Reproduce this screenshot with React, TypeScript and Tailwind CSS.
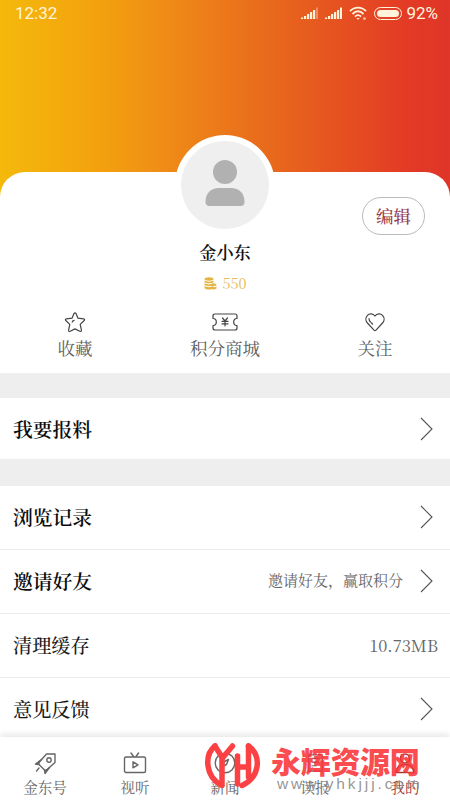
import type { ReactNode } from "react";

const serif = "font-['Noto_Serif_CJK_SC','Noto_Serif_SC','Noto_Sans_CJK_SC',serif]";

function Signal({ faded }: { faded?: boolean }) {
    return <svg width="18" height="13" viewBox="0 0 18 13" fill="#fff3dc">
        <rect x="0" y="10.5" width="2.2" height="1.5" />
        <rect x="3" y="9" width="2.2" height="3" />
        <rect x="6" y="7" width="2.2" height="5" />
        <rect x="9" y="5" width="2.2" height="7" />
        <rect x="12" y="3" width="2.2" height="9" />
        <rect x="15" y="0.5" width="2" height="11.5" opacity={faded ? 0.35 : 1} />
    </svg>
}

function StatusBar() {
    return <div className="flex h-[27px] items-start justify-between pl-[15px] pr-[12px] pt-[3px] font-['Roboto',sans-serif] text-[#fff3dc]">
        <span className="text-[17px] leading-[20px]">12:32</span>
        <div className="flex h-5 items-center">
            <Signal faded />
            <span className="w-[6px]" />
            <Signal />
            <svg className="ml-[6px]" width="19" height="15" viewBox="0 0 19 15" fill="none" stroke="#fff3dc" strokeWidth="1.8">
                <path d="M1 5.2C5.5.5 12.5.5 17 5.2" />
                <path d="M3.5 8C7 4.5 11 4.5 14.5 8" />
                <path d="M6 10.6c2-1.9 4-1.9 6 0" />
                <path d="M7.3 12h3.4L9 13.8z" fill="#fff3dc" stroke="none" />
                <circle cx="15.5" cy="12.5" r="1.5" fill="#fff3dc" stroke="none" opacity=".6" />
            </svg>
            <span className="ml-[6px] flex h-[13px] w-[28px] rounded-full border border-[#fff3dc] p-[2px]">
                <span className="flex-1 rounded-full bg-[#fff3dc]" />
            </span>
            <span className="ml-[4px] text-[17px] leading-5">92%</span>
        </div>
    </div>
}

function Chevron() {
    return <svg className="mr-[5px]" width="13" height="24" viewBox="0 0 13 24" fill="none" stroke="#555" strokeWidth="1.1">
        <path d="M1 1l11 11L1 23" />
    </svg>
}

function Action({ icon, label }: { icon: ReactNode; label: string }) {
    return <div className="flex w-[150px] flex-col items-center">
        <div className="flex h-[22px] items-center">{icon}</div>
        <span className="mt-[4px] text-[17.5px] leading-[22px] text-[#5e5e5e]">{label}</span>
    </div>
}

function Row({ label, bold, children }: { label: string; bold?: boolean; children?: ReactNode }) {
    return <div className="flex h-[64px] items-center justify-between pb-[2px] pl-[13px] pr-[12px]">
        <span className={bold ? "text-[19.8px] font-semibold leading-[28px] text-[#0c0c0c]" : "text-[19.2px] font-medium leading-[28px] text-[#181818]"}>{label}</span>
        <div className="flex items-center text-[#666]">{children}</div>
    </div>
}

function Tab({ icon, label, active }: { icon: ReactNode; label: string; active?: boolean }) {
    return <div className={`flex w-[90px] flex-col items-center pt-[14px] ${active ? "text-[#a43732]" : "text-[#666]"}`}>
        <div className="flex h-6 items-center">{icon}</div>
        <span className="mt-[2px] text-[14.5px] leading-[20px]">{label}</span>
    </div>
}

function Watermark() {
    return <div className="pointer-events-none absolute left-[204px] top-0 flex h-[63px] w-[230px]">
        <svg className="mt-[3px] shrink-0" width="58" height="50" viewBox="0 0 58 50" fill="none" stroke="#fb4144" strokeWidth="5.5" strokeLinecap="round" strokeLinejoin="round">
            <path d="M11 6C0 15 1 37 18 45.5V18" />
            <path d="M11 6l7.5 12L28.5 6" />
            <path d="M33.5 16v28M33.5 27h11M44.5 6v31" />
            <path d="M44.5 6C58 16 56 37 38 45.5" />
        </svg>
        <div className="ml-[9px] flex flex-col whitespace-nowrap">
            <span className="mt-[7px] font-['Noto_Sans_CJK_SC',sans-serif] text-[30px] font-black leading-[32px] tracking-[-0.3px] text-[#fb3438]/90">永辉资源网</span>
            <span className="ml-[6px] mt-[-1px] font-['Liberation_Sans',sans-serif] text-[15.5px] leading-[18px] tracking-[2.9px] text-[#8a8a8a]/90">www.yhkjjj.com</span>
        </div>
    </div>
}

export default function App() {
    return <div className={`relative h-[800px] w-[450px] overflow-hidden bg-[linear-gradient(90deg,#f4b90b_0%,#f3a10e_22%,#ef8b17_37%,#e8661d_62%,#e33b25_90%,#df3529_100%)] ${serif}`}>
        <StatusBar />
        <main className="relative mt-[145px] h-[628px] rounded-t-[25px] bg-white">
            <div className="absolute left-[175px] top-[-37px] flex h-[100px] w-[100px] items-center justify-center rounded-full bg-white">
                <div className="flex h-[88px] w-[88px] items-center justify-center rounded-full bg-[#efefef]">
                    <svg className="mb-[5px]" width="42" height="48" viewBox="0 0 42 48" fill="#b1b1b1">
                        <circle cx="21" cy="13" r="12" />
                        <path d="M1.5 43C1.5 34 7 29 15 29h12c8 0 13.5 5 13.5 14 0 2.5-1.5 4-4 4h-31c-2.5 0-4-1.5-4-4z" />
                    </svg>
                </div>
            </div>
            <button className="absolute right-[25px] top-[25px] h-[38px] w-[63px] rounded-full border border-[#bbb] text-[17.5px] font-medium leading-[34px] text-[#963b50]">编辑</button>

            <section className="flex h-[201px] flex-col items-center pt-[67px]">
                <h1 className="text-[17.2px] font-semibold leading-[26px] text-[#111]">金小东</h1>
                <div className="mt-[8px] flex h-5 items-center gap-[6px] text-[#e3bd57]">
                    <svg width="13" height="13" viewBox="0 0 13 13" fill="#e4b441">
                        <ellipse cx="5" cy="2" rx="4.5" ry="1.7" />
                        <path d="M.5 3.5c2 1.5 7 1.5 9 0v1.7c-2 1.5-7 1.5-9 0zM.5 6.3c2 1.5 7 1.5 9 0V8c-2 1.5-7 1.5-9 0zM.5 9.1c2 1.5 7 1.5 9 0v2.2c-2 1.7-7 1.7-9 0z" />
                        <ellipse cx="9.5" cy="7.8" rx="3" ry="1.3" />
                        <path d="M7 9.5c1.5 1 4 1 5.500 0v2c-1.500 1.200-4 1.200-5.500 0z" />
                    </svg>
                    <span className="text-[14.5px] leading-5">550</span>
                </div>
                <div className="mt-[18px] flex">
                    <Action label="收藏" icon={
                        <svg width="22" height="21" viewBox="0 0 22 21" fill="none" stroke="#444" strokeWidth="1.2" strokeLinejoin="round" strokeLinecap="round">
                            <path d="M9.9 1.7Q11 0 12.1 1.7L14 6.2l5.6.6q1.7.4.6 1.7l-4 3.9 1.2 5.7q.1 1.9-1.6 1.2L11 16.9l-4.8 2.4q-1.7.7-1.6-1.2l1.2-5.7-4-3.900Q.7 7.200 2.400 6.800L8 6.200z" />
                            <path d="M8.2 10.200q.3-1.500 1.900-1.900" />
                        </svg>
                    } />
                    <Action label="积分商城" icon={
                        <svg width="26" height="18" viewBox="0 0 26 18" fill="none" stroke="#444" strokeWidth="1.2" strokeLinejoin="round" strokeLinecap="round">
                            <path d="M3 1h20q2 0 2 2v2.500q-3.300 0-3.300 3.500T25 12.500V15q0 2-2 2H3q-2 0-2-2v-2.500Q4.300 12.500 4.300 9T1 5.500V3q0-2 2-2z" />
                            <path d="M10.500 5L13 8l2.500-3M10 8.300h6M10 10.800h6M13 8v5" />
                        </svg>
                    } />
                    <Action label="关注" icon={
                        <svg width="20" height="19" viewBox="0 0 20 19" fill="none" stroke="#444" strokeWidth="1.2" strokeLinejoin="round" strokeLinecap="round">
                            <path d="M10 3C8 .5 4.500.3 2.500 2.300S.5 7.500 2 9.500l7 7.700q1 1 2 0l7-7.700c1.500-2 1.500-5.200-.5-7.200S12 .5 10 3z" />
                            <path d="M4 5.500q0 2 1.500 3.500M6.500 10l1 1" />
                        </svg>
                    } />
                </div>
            </section>

            <div className="h-[25px] bg-[#eee]" />
            <div className="flex h-[61px] flex-col justify-center pt-[2px]">
                <Row label="我要报料" bold><Chevron /></Row>
            </div>
            <div className="h-[27px] bg-[#eee]" />
            <div className="divide-y divide-[#eaeaea]">
                <Row label="浏览记录" bold><Chevron /></Row>
                <Row label="邀请好友" bold>
                    <span className="mb-[2px] mr-[17px] text-[15px] leading-5">邀请好友，赢取积分</span>
                    <Chevron />
                </Row>
                <Row label="清理缓存"><span className="text-[16.5px] leading-6">10.73MB</span></Row>
                <Row label="意见反馈"><Chevron /></Row>
            </div>
        </main>

        <nav className="absolute bottom-0 left-0 flex h-[63px] w-[450px] bg-white shadow-[0_-3px_6px_rgba(0,0,0,0.09)]">
            <Tab label="金东号" icon={
                <svg width="23" height="23" viewBox="0 0 23 23" fill="none" stroke="currentColor" strokeWidth="1.4" strokeLinejoin="round" strokeLinecap="round">
                    <path d="M12.5 2H21v8.5L11.5 19 4 11.5z" />
                    <circle cx="15" cy="8" r="2.2" />
                    <path d="M7.5 7.5L1.5 12l3.5.5M15.5 15.5L11 21.5l-.5-3.5" fill="currentColor" />
                    <path d="M5 16l-2.500 3" />
                </svg>
            } />
            <Tab label="视听" icon={
                <svg width="24" height="22" viewBox="0 0 24 22" fill="none" stroke="currentColor" strokeWidth="1.4" strokeLinejoin="round" strokeLinecap="round">
                    <rect x="1.5" y="5" width="21" height="15.5" rx="1.5" />
                    <path d="M8 1l2.500 3.500M15.500 1L13 4.500M10 9.800v6l5-3z" />
                </svg>
            } />
            <Tab label="新闻" icon={
                <svg width="22" height="22" viewBox="0 0 22 22" fill="none" stroke="currentColor" strokeWidth="1.4" strokeLinejoin="round">
                    <circle cx="11" cy="11" r="9.8" />
                    <path d="M14.500 7.500l-2 5-4 2 2-5z" />
                </svg>
            } />
            <Tab label="读报" icon={
                <svg width="20" height="20" viewBox="0 0 22 22" fill="none" stroke="currentColor" strokeWidth="1.3">
                    <path d="M4 2h15v18H4zM7 6h9M7 10h9M7 14h6" />
                </svg>
            } />
            <Tab label="我的" active icon={
                <svg width="22" height="22" viewBox="0 0 22 22" fill="none" stroke="currentColor" strokeWidth="1.6" strokeLinejoin="round">
                    <circle cx="11" cy="6.5" r="4.5" />
                    <path d="M2 20.500c.5-5 4-8 9-8s8.500 3 9 8z" />
                </svg>
            } />
            <Watermark />
        </nav>
    </div>
}
